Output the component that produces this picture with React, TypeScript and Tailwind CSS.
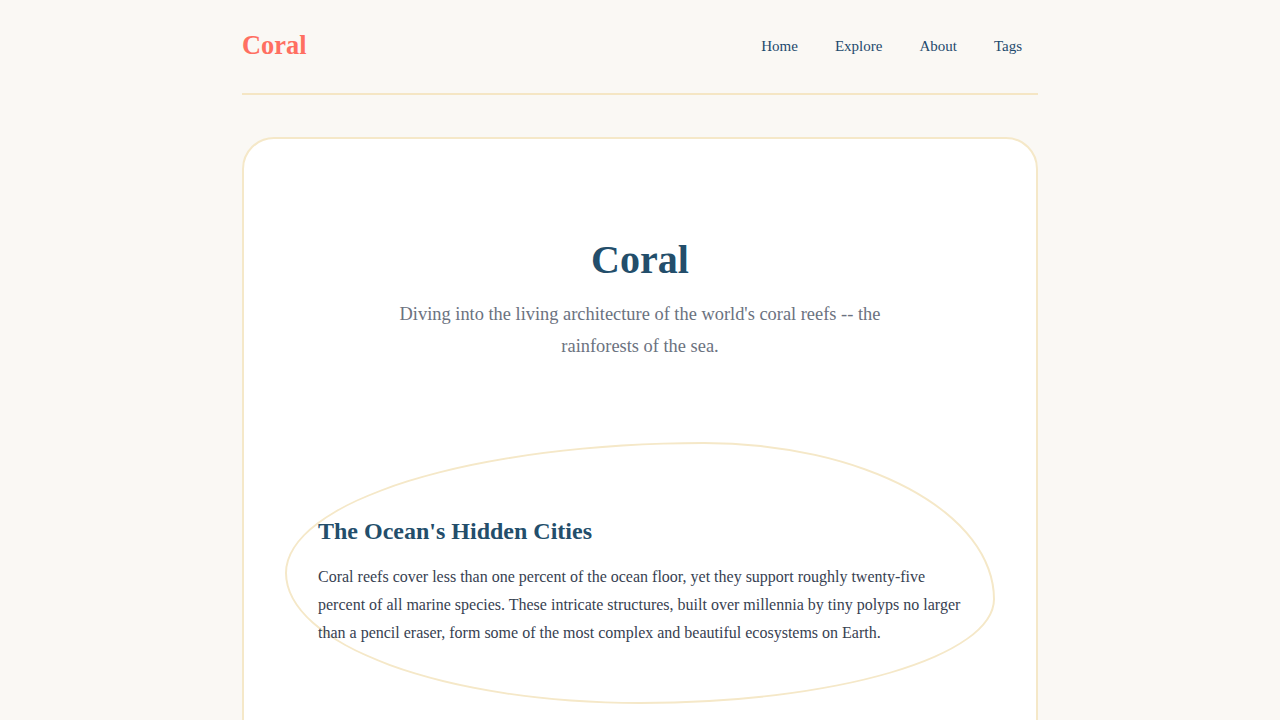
export default function App() {
  return (
    <div className="min-h-screen bg-[#faf8f4] font-['Liberation_Serif',_'Times_New_Roman',_serif]">
      <div className="mx-auto w-[796px]">
        <header className="flex h-[95px] items-center justify-between border-b-2 border-[#f5e6c4] pb-[3px]">
          <a className="text-[26.4px] font-bold leading-none text-[#ff6f61]" href="#">
            Coral
          </a>
          <nav className="flex gap-[5px] pt-[2px] text-[15px] text-[#1e4a6d]">
            {['Home', 'Explore', 'About', 'Tags'].map((item) => (
              <a key={item} href="#" className="px-4 py-2">
                {item}
              </a>
            ))}
          </nav>
        </header>

        <main className="mt-[42px] rounded-[32px] border-2 border-[#f5e8c8] bg-white px-[41px] pb-16">
          <section className="pt-[97px] pb-[80px] text-center">
            <h1 className="text-[40px] font-bold leading-[1.2] text-[#234e6b]">Coral</h1>
            <p className="mx-auto mt-[14px] max-w-[500px] text-[18.4px] leading-[32px] text-[#6b7280]">
              Diving into the living architecture of the world's coral reefs -- the rainforests of the sea.
            </p>
          </section>

          <section className="relative px-[33px] pt-[75px] pb-[60px]">
            <div className="pointer-events-none absolute inset-x-0 top-0 h-[262px] rounded-[59%_41%_50%_50%/50%_60%_40%_50%] border-2 border-[#f5e8c8]" />
            <h2 className="relative text-[24px] font-bold leading-[1.2] text-[#234e6b]">The Ocean's Hidden Cities</h2>
            <p className="relative mt-[17px] text-[16px] leading-[28px] text-[#374151]">
              Coral reefs cover less than one percent of the ocean floor, yet they support roughly twenty-five percent
              of all marine species. These intricate structures, built over millennia by tiny polyps no larger than a
              pencil eraser, form some of the most complex and beautiful ecosystems on Earth.
            </p>
          </section>
        </main>
      </div>
    </div>
  )
}
